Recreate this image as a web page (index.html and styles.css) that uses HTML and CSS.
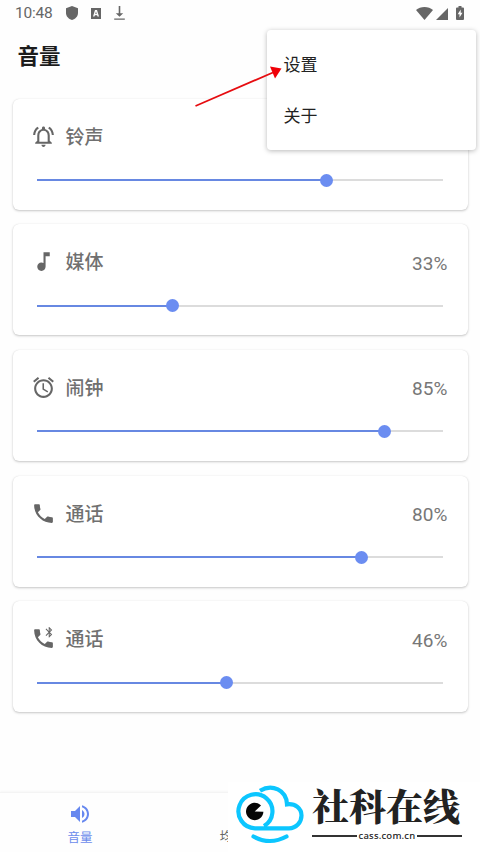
FILE: index.html
```html
<!DOCTYPE html>
<html lang="zh-CN">
<head>
<meta charset="utf-8">
<meta name="viewport" content="width=device-width, initial-scale=1">
<title>音量</title>
<link rel="stylesheet" href="styles.css">
</head>
<body>
<div class="screen">
  <header class="status">
    <span class="time">10:48</span>
    <svg class="shield" width="12" height="14" viewBox="0 0 12 14"><path d="M6 0 12 2.200V7c0 3.300-2.500 6-6 7C2.500 13 0 10.300 0 7V2.200z"/></svg>
    <svg class="app" width="10" height="11" viewBox="0 0 10 11"><path fill-rule="evenodd" d="M0 0h10v11H0zM4 2 2 8.500h1.500l.4-1.300h2.200l.4 1.300H8L6 2zm1 1.600.7 2.300H4.300z"/></svg>
    <svg class="download" width="11" height="14" viewBox="0 0 11 14"><path d="M4.700 0h1.600v7.200h2.900L5.500 10.800 1.800 7.200h2.900zM.2 12.500h10.600v1.300H.2z"/></svg>
    <span class="spacer"></span>
    <svg class="wifi" width="17" height="13" viewBox="0 0 17 13"><path d="M8.500 13 0 3C2.300 1 5.200 0 8.500 0S14.700 1 17 3z"/></svg>
    <svg class="signal" width="12" height="12" viewBox="0 0 12 12"><path d="M12 0v12H0z"/></svg>
    <svg class="battery" width="8" height="14" viewBox="0 0 8 14"><path fill-rule="evenodd" d="M2.500 0h3v1.400H7q1 0 1 1V13q0 1-1 1H1q-1 0-1-1V2.400q0-1 1-1h1.500zM4.700 3.500 1.700 8.300h1.800v3.200l3-4.700H4.700z"/></svg>
  </header>
  <h1>音量</h1>
  <main class="cards">
    <section class="card">
      <div class="row"><svg class="icon" viewBox="0 0 24 24"><path d="M12 22c1.100 0 2-.9 2-2h-4c0 1.100.9 2 2 2zm6-6v-5c0-3.070-1.630-5.640-4.500-6.320V4c0-.83-.67-1.500-1.500-1.500s-1.500.67-1.500 1.500v.68C7.640 5.360 6 7.920 6 11v5l-2 2v1h16v-1l-2-2zm-2 1H8v-6c0-2.480 1.510-4.500 4-4.500s4 2.020 4 4.500v6zM7.580 4.080 6.150 2.650C3.750 4.480 2.170 7.300 2.030 10.500h2c.15-2.650 1.510-4.970 3.550-6.420zM19.970 10.500h2c-.15-3.200-1.730-6.020-4.120-7.850l-1.420 1.430c2.020 1.450 3.390 3.770 3.540 6.420z"/></svg><span class="name">铃声</span></div>
      <div class="slider"><div class="fill" style="width:71.400%"></div><div class="knob"></div></div>
    </section>
    <section class="card">
      <div class="row"><svg class="icon" viewBox="0 0 24 24"><path d="M12 3v10.550c-.59-.34-1.270-.55-2-.55-2.210 0-4 1.790-4 4s1.790 4 4 4 4-1.790 4-4V7h4V3h-6z"/></svg><span class="name">媒体</span><span class="percent">33%</span></div>
      <div class="slider"><div class="fill" style="width:33.300%"></div><div class="knob"></div></div>
    </section>
    <section class="card">
      <div class="row"><svg class="icon" viewBox="0 0 24 24"><path d="m22 5.720-4.600-3.860-1.290 1.530 4.600 3.860L22 5.720zM7.880 3.390 6.600 1.860 2 5.710l1.290 1.530 4.590-3.850zM12.500 8H11v6l4.750 2.850.75-1.230-4-2.370V8zM12 4c-4.970 0-9 4.030-9 9s4.020 9 9 9c4.970 0 9-4.030 9-9s-4.030-9-9-9zm0 16c-3.870 0-7-3.130-7-7s3.130-7 7-7 7 3.130 7 7-3.130 7-7 7z"/></svg><span class="name">闹钟</span><span class="percent">85%</span></div>
      <div class="slider"><div class="fill" style="width:85.600%"></div><div class="knob"></div></div>
    </section>
    <section class="card">
      <div class="row"><svg class="icon" viewBox="0 0 24 24"><path d="M6.620 10.790c1.440 2.830 3.760 5.140 6.590 6.590l2.200-2.200c.27-.27.67-.36 1.020-.24 1.120.37 2.330.57 3.570.57.55 0 1 .45 1 1V20c0 .55-.45 1-1 1-9.390 0-17-7.610-17-17 0-.55.45-1 1-1h3.500c.55 0 1 .45 1 1 0 1.250.2 2.450.57 3.570.11.35.03.74-.25 1.020l-2.200 2.200z"/></svg><span class="name">通话</span><span class="percent">80%</span></div>
      <div class="slider"><div class="fill" style="width:80%"></div><div class="knob"></div></div>
    </section>
    <section class="card">
      <div class="row"><svg class="icon" viewBox="0 0 24 24"><path d="M6.620 10.790c1.440 2.830 3.760 5.140 6.590 6.590l2.200-2.200c.27-.27.67-.36 1.020-.24 1.120.37 2.330.57 3.570.57.55 0 1 .45 1 1V20c0 .55-.45 1-1 1-9.390 0-17-7.610-17-17 0-.55.45-1 1-1h3.500c.55 0 1 .45 1 1 0 1.250.2 2.450.57 3.570.11.35.03.74-.25 1.020l-2.200 2.200z"/><path d="M14.710 9.500 17 7.210V11h.5l2.850-2.850L18.210 6l2.150-2.150L17.500 1H17v3.790L14.710 2.500l-.71.710L16.790 6 14 8.790l.71.710zM18 2.910l.94.940-.94.940V2.910zm0 4.300.94.940-.94.940V7.210z"/></svg><span class="name">通话</span><span class="percent">46%</span></div>
      <div class="slider"><div class="fill" style="width:46.700%"></div><div class="knob"></div></div>
    </section>
  </main>
  <nav class="tabs">
    <div class="tab active"><svg width="24" height="24" viewBox="0 0 24 24"><path d="M3 9v6h4l5 5V4L7 9H3zm13.500 3c0-1.770-1.020-3.290-2.500-4.030v8.050c1.480-.73 2.500-2.250 2.500-4.020zM14 3.230v2.060c2.890.86 5 3.540 5 6.710s-2.110 5.850-5 6.710v2.060c4.010-.91 7-4.490 7-8.770s-2.990-7.860-7-8.770z"/></svg><span>音量</span></div>
    <div class="tab eq"><span>均衡器</span></div>
  </nav>
  <div class="menu"><div>设置</div><div>关于</div></div>
  <svg class="arrow" width="90" height="44" viewBox="0 0 90 44"><path d="M.5 41 78 7.500" stroke="#e60c10" stroke-width="1.800"/><path d="M86.500 3.500 75 1.500 80 13.500z" fill="#f00008"/></svg>
  <div class="brand">
    <svg class="cloud" width="76" height="70" viewBox="0 0 76 70"><g fill="none" stroke="#0cc6ff" stroke-width="4.200"><path d="M36 44A17 17 0 1 0 27 46.300H61C68 46.300 73.500 40.500 73.500 33.500S67.500 21.300 59 22.300C58.500 8 44 1.500 32 8.800"/><path stroke-linecap="round" d="M25.500 54.500Q42 63.500 58.500 54.500"/></g><path fill="#050505" d="M26.700 29.500 33 23.500A8.700 8.700 0 1 0 35.400 29.800z"/></svg>
    <div class="brand-copy"><div class="brand-name">社科在线</div><div class="domain"><i></i><span>cass.com.cn</span><i></i></div></div>
  </div>
</div>
</body>
</html>
```
FILE: styles.css
```css
* { box-sizing: border-box; }
body { margin: 0; background: #fefefe; font-family: Roboto, "Noto Sans CJK SC", sans-serif; }
svg { display: block; flex: none; }
.screen { position: relative; width: 480px; height: 852px; overflow: hidden; display: flex; flex-direction: column; }
.status { height: 26px; padding: 0 15px; display: flex; align-items: center; color: #666; fill: #666; }
.time { width: 51px; font-size: 15.500px; letter-spacing: -.2px; }
.app { margin-left: 13px; }
.download { margin-left: 13px; }
.spacer { flex: 1; }
.signal { margin: 2px 8px 0 3px; }
.battery { margin-right: 1px; }
h1 { margin: 14px 0 0 17.500px; height: 30px; font: 700 21.500px/30px "Noto Sans CJK SC", sans-serif; color: #1c1c1c; }
.cards { margin: 28.500px 12.500px 0; display: flex; flex-direction: column; gap: 14.700px; }
.card { height: 111px; padding: 22.500px 20px 0 18px; border-radius: 6px; background: #fff; box-shadow: 0 1px 2.500px rgba(0,0,0,.22), 0 0 1px rgba(0,0,0,.1); }
.row { height: 30px; display: flex; align-items: center; color: #707070; }
.icon { width: 25px; height: 25px; fill: #666; }
.name { margin: -1px 0 0 10px; font: 500 19px/30px "Noto Sans CJK SC", sans-serif; }
.percent { margin: 3px 0 0 auto; font-size: 19px; letter-spacing: .1px; color: #777; }
.slider { height: 13px; width: 406px; margin: 22.500px 0 0 6.500px; display: flex; align-items: center; background: linear-gradient(#dcdcdc,#dcdcdc) center / 100% 2px no-repeat; }
.fill { height: 2px; background: #6788e2; }
.knob { flex: none; width: 13px; height: 13px; margin-left: -6.500px; border-radius: 50%; background: #6b8df1; }
.tabs { margin-top: auto; height: 60px; border-top: 1px solid #f4f4f4; display: grid; grid-template-columns: repeat(3, 160px); box-shadow: 0 -1px 2px rgba(0,0,0,.03); }
.tab { padding-top: 9px; display: flex; flex-direction: column; align-items: center; font: 12.500px/18px "Noto Sans CJK SC", sans-serif; color: #666; }
.tab span { margin-top: 2px; }
.active { color: #6c8cec; fill: #6788ef; }
.eq { padding: 32px 3px 0 0; }
.menu { position: absolute; left: 266.500px; top: 30px; width: 209.500px; height: 119.500px; padding: 8px 17px; border-radius: 4px; background: #fff; box-shadow: 0 1px 5px rgba(0,0,0,.28); font: 17px/51px "Noto Sans CJK SC", sans-serif; color: #222; }
.arrow { position: absolute; left: 195px; top: 65px; }
.brand { position: absolute; left: 228px; top: 782px; width: 252px; height: 70px; background: #fff; display: flex; }
.brand-copy { margin-left: 8px; width: 150px; }
.brand-name { height: 47px; font: 900 37px/46px "Noto Serif CJK SC", "Noto Sans CJK SC", serif; color: #222; white-space: nowrap; }
.domain { height: 14px; display: flex; align-items: center; justify-content: space-between; font: 500 9.500px/14px "Noto Sans", sans-serif; color: #222; }
.domain i { width: 45px; height: 2px; background: #333; }
.domain span { letter-spacing: .2px; }
```
